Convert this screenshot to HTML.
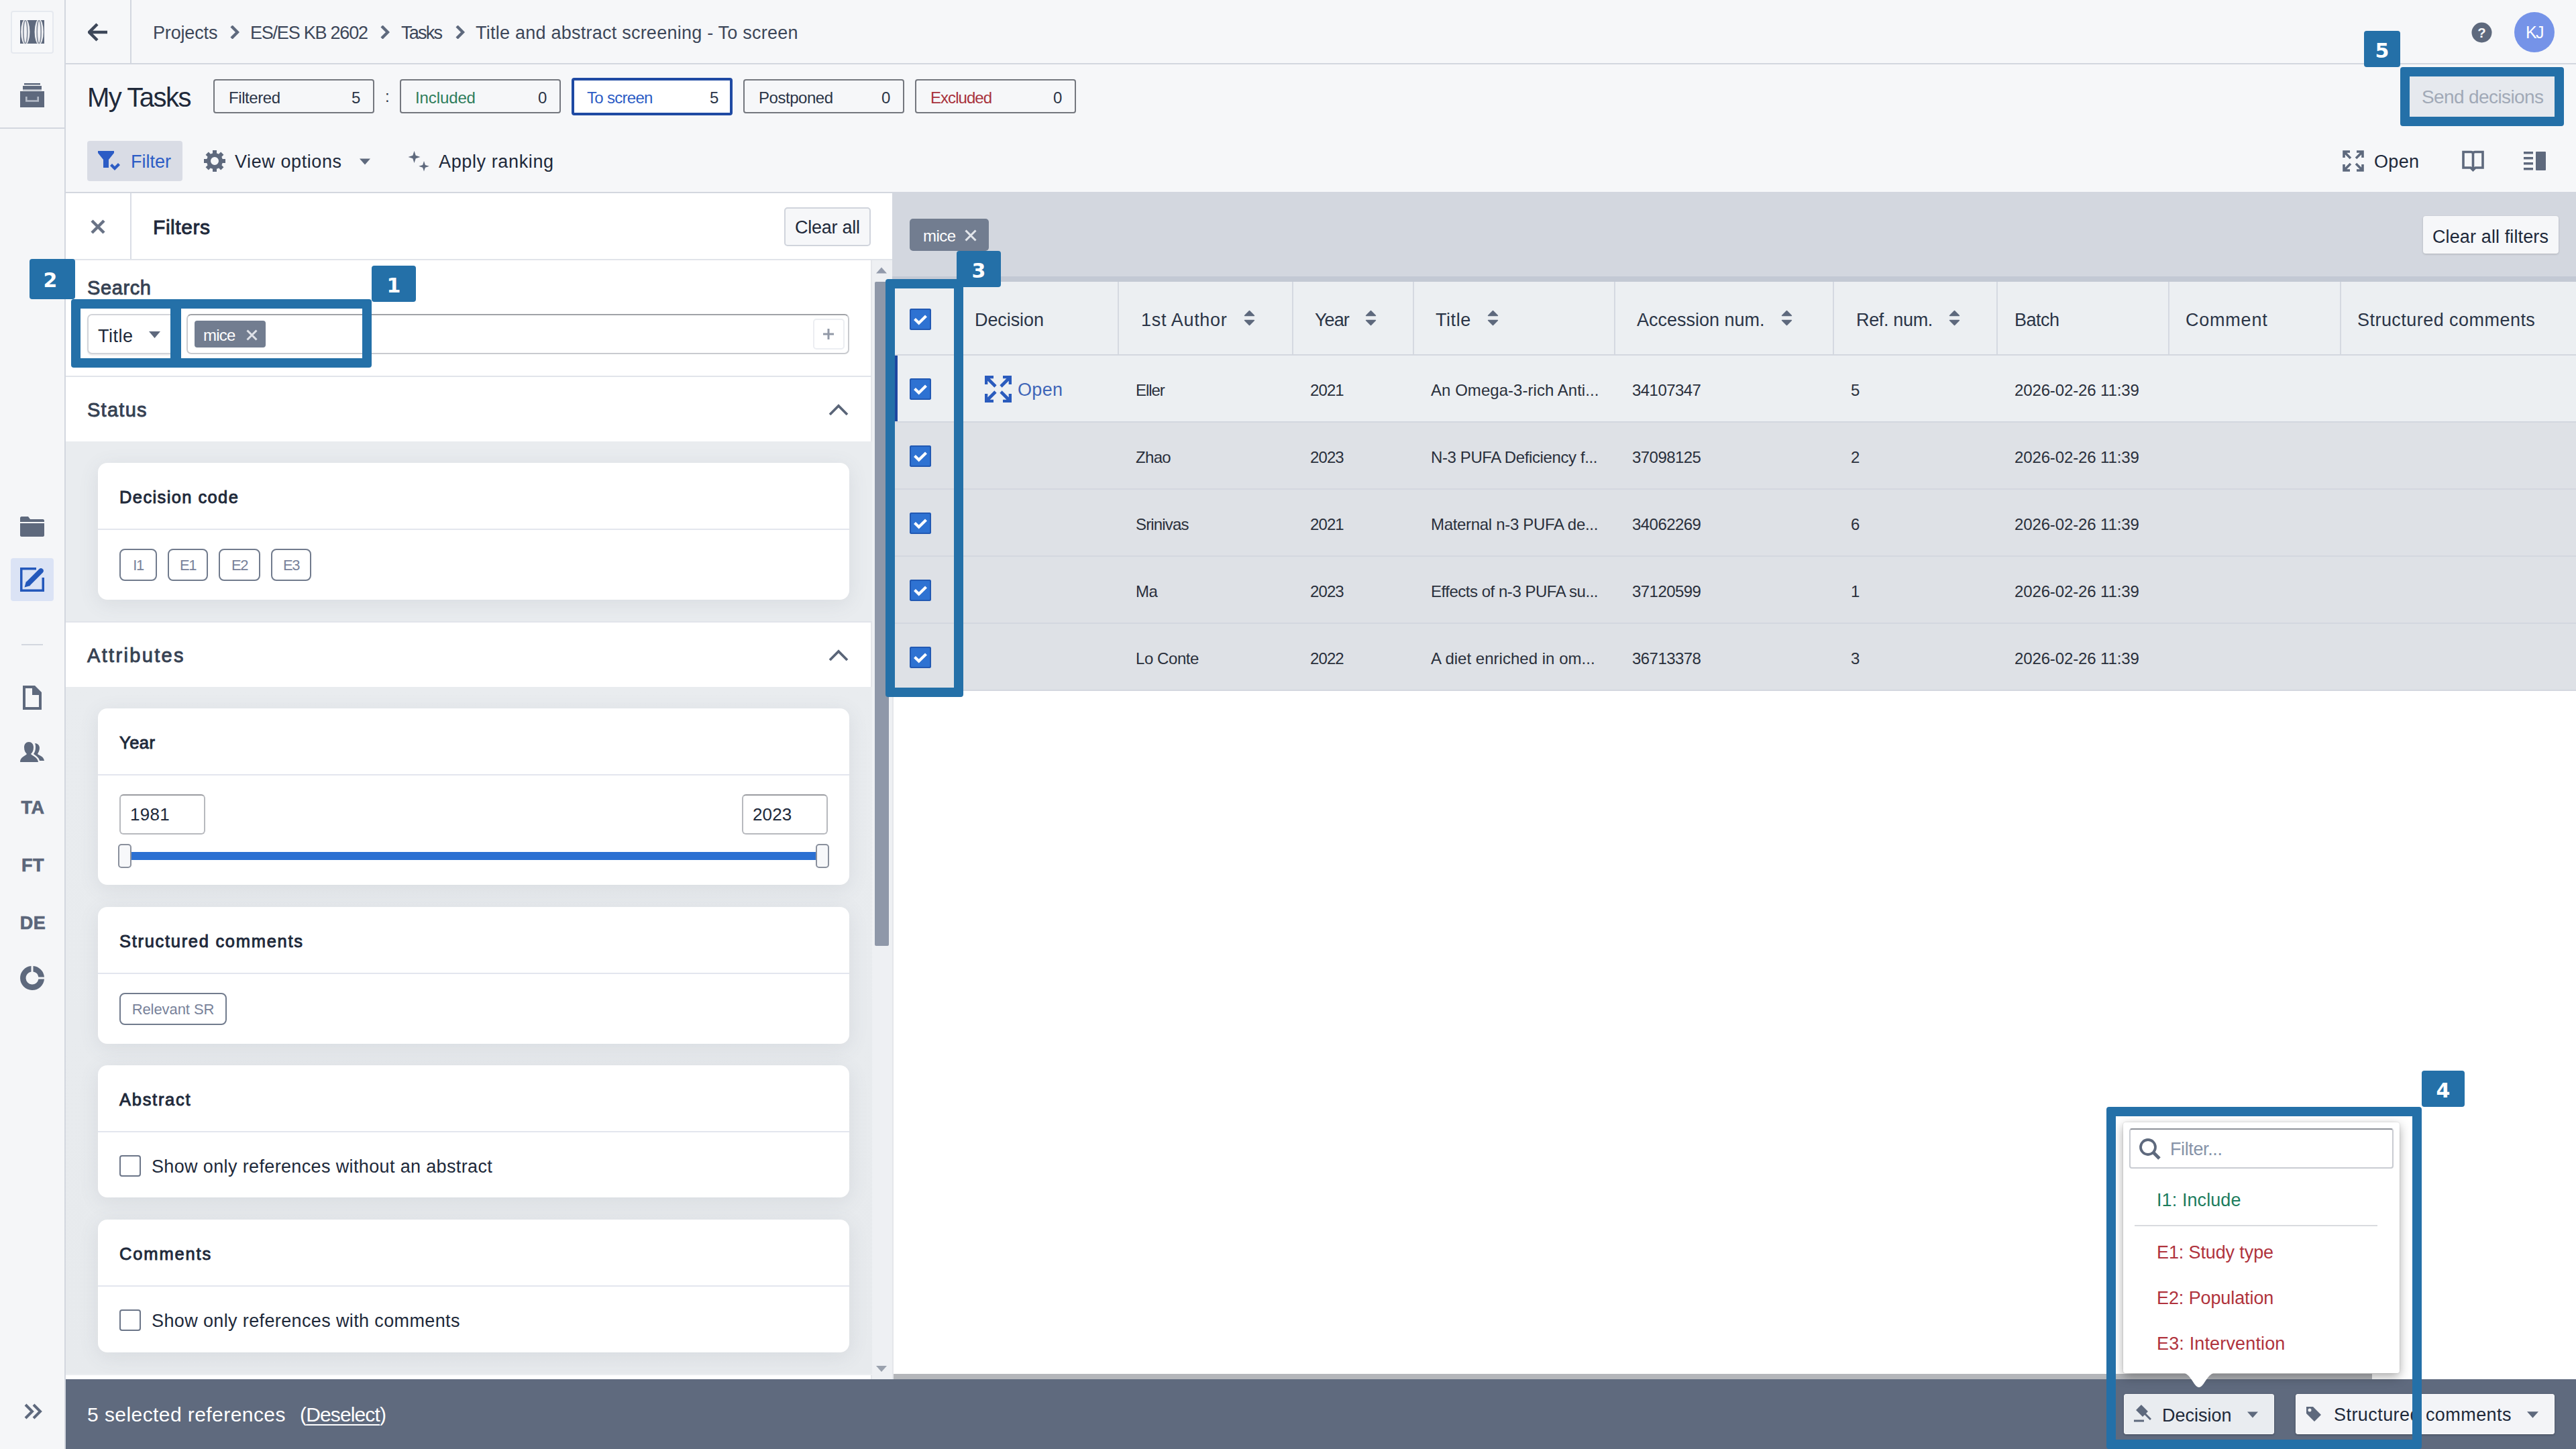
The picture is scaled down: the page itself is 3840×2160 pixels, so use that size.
<!DOCTYPE html>
<html lang="en">
<head>
<meta charset="utf-8">
<title>Title and abstract screening - To screen</title>
<style>
*{box-sizing:border-box;margin:0;padding:0}
html,body{width:3840px;height:2160px;overflow:hidden;background:#f6f7f9;font-family:"Liberation Sans",sans-serif;color:#2b3547}
.a{position:absolute}
.t{position:absolute;white-space:nowrap;line-height:40px;height:40px;font-size:27px;color:#2b3547;letter-spacing:0}
.b{font-weight:normal;-webkit-text-stroke:0.9px currentColor}
.box{position:absolute;border:2px solid #74777e;border-radius:4px}
.card{position:absolute;left:146px;width:1120px;background:#fff;border-radius:14px;box-shadow:0 6px 30px rgba(80,90,105,.11)}
.hr{position:absolute;left:0;right:0;height:2px;background:#e3e6ee}
.chip{position:absolute;border:2px solid #717b8d;border-radius:8px;color:#78829a;font-size:22px;text-align:center;line-height:46px;height:48px;top:818px;letter-spacing:-1.500px}
.cb{position:absolute;width:32px;height:32px;border-radius:3px;background:#2e72d2;box-shadow:inset 0 0 0 2px #2259b3;left:1356px}
.cb svg{position:absolute;left:0;top:0}
.ucb{position:absolute;width:32px;height:32px;border:2px solid #6b7588;border-radius:4px;background:#fff;left:178px}
.ann{position:absolute;border:14px solid #2470a8;border-radius:4px}
.badge{position:absolute;background:#2470a8;border-radius:4px;color:#fff;font-weight:bold;font-size:30px;text-align:center;font-family:"DejaVu Sans","Liberation Sans",sans-serif}
.row{position:absolute;left:1334px;right:0;height:100px;background:#dee1e6;border-bottom:2px solid #d3d7df}
.cell{position:absolute;white-space:nowrap;font-size:24px;line-height:40px;height:40px;color:#2a303c;letter-spacing:0}
.th{position:absolute;white-space:nowrap;font-size:27px;line-height:40px;height:40px;top:457px;color:#2b3547;letter-spacing:0}
.vb{position:absolute;top:420px;height:108px;width:2px;background:#d5d9e1}
.sort{position:absolute;top:462px}
.ic{position:absolute;fill:#5b667a}
.side{position:absolute;left:0;width:98px;text-align:center;font-weight:bold;font-size:27px;color:#5b667a;line-height:40px;height:40px;-webkit-text-stroke:0.7px #5b667a;letter-spacing:0.5px}
</style>
</head>
<body>
<!-- SIDEBAR -->
<div class="a" id="sidebar" style="left:0;top:0;width:98px;height:2160px;background:#f5f6f8;border-right:2px solid #d3d7df"></div>
<div class="a" style="left:0;top:190px;width:96px;height:2px;background:#d3d7df"></div>
<!-- logo -->
<div class="a" style="left:16px;top:16px;width:64px;height:64px;border:2px solid #e6e9ef;border-radius:4px;background:#f7f8fa"></div>
<svg class="a" style="left:30px;top:30px" width="36" height="36" viewBox="0 0 36 36"><rect width="36" height="35" fill="#5e697d"/><ellipse cx="7.800" cy="17.500" rx="6.600" ry="19" fill="#f1f2f5"/><ellipse cx="28.200" cy="17.500" rx="6.600" ry="19" fill="#f1f2f5"/><g fill="none" stroke="#5e697d" stroke-width="1.600" opacity=".75"><ellipse cx="7.800" cy="17.500" rx="3" ry="17"/><ellipse cx="28.200" cy="17.500" rx="3" ry="17"/></g></svg>
<!-- archive -->
<svg class="a" style="left:30px;top:124px" width="36" height="36" viewBox="0 0 36 36"><g fill="#5e697d"><rect x="6" y="0" width="24" height="2.500"/><rect x="4" y="4" width="28" height="5"/><rect x="4" y="9" width="28" height="2" opacity=".45"/><rect x="0" y="12" width="36" height="24"/></g><path fill="none" stroke="#b4bbc7" stroke-width="2.600" d="M9.300 20v6.500h17.400v-6.500"/></svg>
<!-- folder -->
<svg class="a" style="left:30px;top:770px" width="36" height="30" viewBox="0 0 36 30"><path fill="#5e697d" d="M0 2c0-1 1-2 2-2h10l3 4h19c1 0 2 1 2 2v2h-36zM0 10h36v18c0 1-1 2-2 2h-32c-1 0-2-1-2-2z"/></svg>
<!-- edit active -->
<div class="a" style="left:16px;top:832px;width:64px;height:64px;background:#dbe3f5;border-radius:4px"></div>
<svg class="a" style="left:30px;top:846px" width="36" height="36" viewBox="0 0 36 36"><g fill="none" stroke="#2458bb"><path d="M24 1.750H1.750v32.500h32.500V15" stroke-width="3.500"/><path d="M13.500 22.500L31 5" stroke-width="7.500" stroke-linecap="round"/></g><path fill="#2458bb" d="M6.500 29.500l2.500-9 6.500 6.500z"/></svg>
<div class="a" style="left:32px;top:960px;width:32px;height:2px;background:#d3d7df"></div>
<!-- file -->
<svg class="a" style="left:34px;top:1022px" width="28" height="36" viewBox="0 0 28 36"><path fill="#5e697d" fill-rule="evenodd" d="M0 0h18l10 10v26h-28zM4 4v28h20v-18h-10v-10z"/></svg>
<!-- users -->
<svg class="a" style="left:30px;top:1106px" width="36" height="30" viewBox="0 0 36 30"><g fill="#5e697d"><path d="M13 0c4 0 7 3 7 8s-2 8-4 10c2 3 10 4 11 12h-27c0-8 8-9 10-12-2-2-4-5-4-10s3-8 7-8z"/><path d="M22 2c4 0 7 3 7 7s-2 7-3 9c2 2 9 3 10 10h-7c-1-5-6-8-9-10 2-3 3-6 3-10 0-2 0-4-1-6z"/></g></svg>
<div class="side" style="top:1184px">TA</div>
<div class="side" style="top:1270px">FT</div>
<div class="side" style="top:1356px">DE</div>
<!-- pie -->
<svg class="a" style="left:30px;top:1440px" width="36" height="36" viewBox="0 0 36 36"><path fill="#5e697d" fill-rule="evenodd" d="M16.500 0v8.600a9.500 9.500 0 1 0 10.900 10.900h8.600a18 18 0 1 1-19.500-19.500zM19.500 0a18 18 0 0 1 16.500 16.500h-8.600a9.500 9.500 0 0 0-7.900-7.900z"/></svg>
<!-- expand -->
<svg class="a" style="left:35px;top:2091px" width="28" height="26" viewBox="0 0 28 26"><path fill="none" stroke="#5e697d" stroke-width="4" d="M3 3l10 10-10 10M15 3l10 10-10 10"/></svg>
<!-- TOPBAR -->
<div class="a" style="left:98px;top:94px;right:0;height:2px;background:#d3d7df"></div>
<div class="a" style="left:194px;top:0;width:2px;height:94px;background:#d3d7df"></div>
<svg class="a" style="left:131px;top:34px" width="30" height="28" viewBox="0 0 30 28"><path fill="none" stroke="#3d4759" stroke-width="4.5" d="M29 14h-25M14 2l-12 12 12 12"/></svg>
<span class="t" style="letter-spacing:-0.16px;left:228px;top:29px;color:#3d4759" id="bc1">Projects</span>
<svg class="a" style="left:343px;top:38px" width="14" height="20" viewBox="0 0 14 20"><path fill="none" stroke="#5e697d" stroke-width="4.400" d="M2 1l9 9-9 9"/></svg>
<span class="t" style="letter-spacing:-1.22px;left:373px;top:29px;color:#3d4759" id="bc2">ES/ES KB 2602</span>
<svg class="a" style="left:567px;top:38px" width="14" height="20" viewBox="0 0 14 20"><path fill="none" stroke="#5e697d" stroke-width="4.400" d="M2 1l9 9-9 9"/></svg>
<span class="t" style="letter-spacing:-1.76px;left:598px;top:29px;color:#3d4759" id="bc3">Tasks</span>
<svg class="a" style="left:679px;top:38px" width="14" height="20" viewBox="0 0 14 20"><path fill="none" stroke="#5e697d" stroke-width="4.400" d="M2 1l9 9-9 9"/></svg>
<span class="t" style="letter-spacing:0.24px;left:709px;top:29px;color:#3d4759" id="bc4">Title and abstract screening - To screen</span>
<!-- help + avatar -->
<svg class="a" style="left:3684px;top:33px" width="31" height="31" viewBox="0 0 32 32"><circle cx="16" cy="16" r="15.500" fill="#5e697d"/><text x="16" y="23.500" font-size="21" font-weight="bold" text-anchor="middle" fill="#f6f7f9" font-family="Liberation Sans, sans-serif">?</text></svg>
<div class="a" style="left:3748px;top:18px;width:60px;height:60px;border-radius:30px;background:#7593e8;color:#fff;font-size:25px;line-height:60px;text-align:center;letter-spacing:-1.500px">KJ</div>
<!-- HEADER -->
<span class="t" style="letter-spacing:-1.51px;left:130px;top:120px;font-size:40px;line-height:50px;height:50px;color:#20293a" id="mytasks">My Tasks</span>
<div class="box" style="left:318px;top:118px;width:240px;height:51px"></div>
<span class="t" style="letter-spacing:-0.43px;left:341px;top:126px;font-size:24px" id="s1">Filtered</span><span class="t" style="left:524px;top:126px;font-size:24px">5</span>
<span class="t" style="left:574px;top:124px;font-size:24px">:</span>
<div class="box" style="left:596px;top:118px;width:240px;height:51px"></div>
<span class="t" style="letter-spacing:-0.11px;left:619px;top:126px;font-size:24px;color:#2e7d5b" id="s2">Included</span><span class="t" style="left:802px;top:126px;font-size:24px">0</span>
<div class="box" style="left:852px;top:116px;width:240px;height:56px;border:4px solid #1f4aa3;background:#fff"></div>
<span class="t" style="letter-spacing:-0.71px;left:875px;top:126px;font-size:24px;color:#2c5cc5" id="s3">To screen</span><span class="t" style="left:1058px;top:126px;font-size:24px">5</span>
<div class="box" style="left:1108px;top:118px;width:240px;height:51px"></div>
<span class="t" style="letter-spacing:-0.47px;left:1131px;top:126px;font-size:24px" id="s4">Postponed</span><span class="t" style="left:1314px;top:126px;font-size:24px">0</span>
<div class="box" style="left:1364px;top:118px;width:240px;height:51px"></div>
<span class="t" style="letter-spacing:-0.96px;left:1387px;top:126px;font-size:24px;color:#a8323c" id="s5">Excluded</span><span class="t" style="left:1570px;top:126px;font-size:24px">0</span>
<!-- toolbar -->
<div class="a" style="left:130px;top:210px;width:142px;height:60px;background:#d9dce5;border-radius:4px"></div>
<svg class="a" style="left:146px;top:225px" width="33" height="29" viewBox="0 0 33 29"><g fill="#2c5cc5"><path d="M0 0h24v3l-8 10v12h-8v-12l-8-10z"/><path d="M18 22l3-3 4 4 5-5 3 3-8 8z"/></g></svg>
<span class="t" style="letter-spacing:0.0px;left:195px;top:221px;color:#2c5cc5" id="tb1">Filter</span>
<svg class="a" style="left:304px;top:224px" width="32" height="32" viewBox="0 0 32 32"><g fill="#5e697d"><path fill-rule="evenodd" d="M16 4a12 12 0 1 0 0 24 12 12 0 0 0 0-24zm0 6a6 6 0 1 1 0 12 6 6 0 0 1 0-12z"/><g id="gt"><rect x="13" y="0" width="6" height="6"/><rect x="13" y="26" width="6" height="6"/></g><use href="#gt" transform="rotate(45 16 16)"/><use href="#gt" transform="rotate(90 16 16)"/><use href="#gt" transform="rotate(135 16 16)"/></g></svg>
<span class="t" style="letter-spacing:0.58px;left:350px;top:221px;color:#20293a" id="tb2">View options</span>
<svg class="a" style="left:536px;top:236px" width="16" height="10" viewBox="0 0 18 10"><path fill="#5e697d" d="M0 0h18l-9 10z"/></svg>
<svg class="a" style="left:608px;top:224px" width="33" height="33" viewBox="0 0 33 33"><g fill="#5e697d"><path d="M9.500 1l2.200 6.800 6.800 2.200-6.800 2.200-2.200 6.800-2.200-6.800-6.800-2.200 6.800-2.200z"/><path d="M24 16l1.900 5.900 5.900 1.900-5.900 1.900-1.900 5.900-1.900-5.900-5.900-1.900 5.900-1.900z"/></g></svg>
<span class="t" style="letter-spacing:0.62px;left:654px;top:221px;color:#20293a" id="tb3">Apply ranking</span>
<!-- right toolbar -->
<svg class="a" style="left:3492px;top:224px" width="32" height="32" viewBox="0 0 32 32"><g fill="none" stroke="#5e697d" stroke-width="3.6"><path d="M2 11v-9h9M3 3l9 9M21 2h9v9M29 3l-9 9M2 21v9h9M3 29l9-9M30 21v9h-9M29 29l-9-9" /></g></svg>
<span class="t" style="letter-spacing:0.31px;left:3539px;top:221px;color:#20293a" id="tb4">Open</span>
<svg class="a" style="left:3670px;top:224px" width="33" height="33" viewBox="0 0 33 33"><path fill="none" stroke="#5e697d" stroke-width="3.600" d="M2 2.500h11.500q3 0 3 3q0-3 3-3h11.500v23.500h-11l-3.500 3.500l-3.500-3.500h-11zM16.500 5v23"/></svg>
<svg class="a" style="left:3762px;top:226px" width="33" height="28" viewBox="0 0 33 28"><g fill="#5e697d"><rect x="0" y="0" width="14" height="3.500"/><rect x="0" y="8" width="14" height="3.500"/><rect x="0" y="16" width="14" height="3.500"/><rect x="0" y="24" width="14" height="3.500"/><rect x="18" y="0" width="15" height="28" rx="1"/></g></svg>
<div class="a" style="left:98px;top:286px;right:0;height:2px;background:#d3d7df"></div>
<!-- FILTER PANEL -->
<div class="a" id="fpanel" style="left:98px;top:288px;width:1232px;height:1768px;background:#fff"></div>
<div class="a" style="left:194px;top:288px;width:2px;height:98px;background:#d9dde5"></div>
<svg class="a" style="left:134px;top:326px" width="24" height="24" viewBox="0 0 24 24"><path fill="none" stroke="#687285" stroke-width="4.500" d="M3 3l18 18M21 3l-18 18"/></svg>
<span class="t b" style="letter-spacing:0.55px;left:228px;top:319px;font-size:30px;color:#20293a" id="f_title">Filters</span>
<div class="a" style="left:1169px;top:309px;width:129px;height:58px;border:2px solid #d0d4dc;border-radius:5px;background:#f6f7f9"></div>
<span class="t" style="letter-spacing:-0.26px;left:1185px;top:319px;color:#20293a" id="f_clear">Clear all</span>
<div class="a" style="left:98px;top:386px;width:1232px;height:2px;background:#e1e4ea"></div>
<!-- scrollbar -->
<div class="a" style="left:1298px;top:388px;width:32px;height:1668px;background:#eef0f3;border-left:2px solid #e4e6ea"></div>
<svg class="a" style="left:1306px;top:398px" width="16" height="10" viewBox="0 0 16 9"><path fill="#929aab" d="M0 9l8-9 8 9z"/></svg>
<svg class="a" style="left:1306px;top:2036px" width="16" height="9" viewBox="0 0 16 9"><path fill="#9aa1ad" d="M0 0l8 9 8-9z"/></svg>
<div class="a" style="left:1304px;top:420px;width:21px;height:990px;background:#8f98a9;border-radius:2px"></div>
<!-- search -->
<span class="t b" style="letter-spacing:0.62px;left:130px;top:409px;font-size:29px;color:#364152" id="f_search">Search</span>
<div class="a" style="left:130px;top:468px;width:130px;height:60px;border:2px solid #d2d4d9;border-radius:7px;background:#fff;box-shadow:0 2px 2px rgba(0,0,0,.08)"></div>
<span class="t" style="letter-spacing:0.5px;left:146px;top:481px;color:#20293a" id="f_sel">Title</span>
<svg class="a" style="left:222px;top:494px" width="17" height="10" viewBox="0 0 17 10"><path fill="#5e697d" d="M0 0h17l-8.500 10z"/></svg>
<div class="a" style="left:278px;top:468px;width:988px;height:60px;border:2px solid #c9cbcf;border-top-color:#a0a2a7;border-radius:7px;background:#fff"></div>
<div class="a" style="left:290px;top:478px;width:106px;height:40px;border-radius:4px;background:#727d90"></div>
<span class="t" style="letter-spacing:-0.76px;left:303px;top:480px;font-size:24px;color:#fff" id="f_mice">mice</span>
<svg class="a" style="left:367px;top:491px" width="17" height="17" viewBox="0 0 17 17"><path fill="none" stroke="#dfe2e8" stroke-width="3" d="M1.500 1.500l14 14M15.500 1.500l-14 14"/></svg>
<div class="a" style="left:1212px;top:475px;width:47px;height:46px;border:2px solid #eceef2;border-radius:5px"></div>
<svg class="a" style="left:1227px;top:490px" width="16" height="16" viewBox="0 0 16 16"><path fill="none" stroke="#9299a7" stroke-width="3" d="M8 0v16M0 8h16"/></svg>
<div class="a" style="left:98px;top:560px;width:1202px;height:2px;background:#e1e4ea"></div>
<!-- status -->
<span class="t b" style="letter-spacing:1.26px;left:130px;top:591px;font-size:29px;color:#364152" id="f_status">Status</span>
<svg class="a" style="left:1235px;top:602px" width="30" height="18" viewBox="0 0 30 18"><path fill="none" stroke="#5a6578" stroke-width="3.800" d="M2 16l13-13 13 13"/></svg>
<div class="a" style="left:98px;top:658px;width:1202px;height:270px;background:#e9ecef"></div>
<div class="card" style="top:690px;height:204px"><div class="hr" style="top:98px"></div></div>
<span class="t b" style="letter-spacing:1.39px;left:178px;top:721px;font-size:25.500px;color:#20293a" id="c_dec">Decision code</span>
<div class="chip" style="left:178px;width:56px">I1</div>
<div class="chip" style="left:250px;width:60px">E1</div>
<div class="chip" style="left:326px;width:62px">E2</div>
<div class="chip" style="left:404px;width:60px">E3</div>
<!-- attributes -->
<div class="a" style="left:98px;top:926px;width:1202px;height:2px;background:#e1e4ea"></div>
<span class="t b" style="letter-spacing:2.34px;left:130px;top:957px;font-size:29px;color:#364152" id="f_attr">Attributes</span>
<svg class="a" style="left:1235px;top:968px" width="30" height="18" viewBox="0 0 30 18"><path fill="none" stroke="#5a6578" stroke-width="3.800" d="M2 16l13-13 13 13"/></svg>
<div class="a" style="left:98px;top:1024px;width:1202px;height:1026px;background:linear-gradient(#e9ecef,#e7eaed)"></div>
<!-- year -->
<div class="card" style="top:1056px;height:263px"><div class="hr" style="top:98px"></div></div>
<span class="t b" style="letter-spacing:0.49px;left:178px;top:1087px;font-size:25.500px;color:#20293a" id="c_year">Year</span>
<div class="a" style="left:178px;top:1184px;width:128px;height:60px;border:2px solid #b7b9be;border-top-color:#9a9ca1;border-radius:6px;background:#fff"></div>
<span class="t" style="letter-spacing:0.32px;left:194px;top:1194px;color:#20293a;font-size:26px" id="y1">1981</span>
<div class="a" style="left:1106px;top:1184px;width:128px;height:60px;border:2px solid #b7b9be;border-top-color:#9a9ca1;border-radius:6px;background:#fff"></div>
<span class="t" style="letter-spacing:0.15px;left:1122px;top:1194px;color:#20293a;font-size:26px" id="y2">2023</span>
<div class="a" style="left:186px;top:1270px;width:1040px;height:12px;background:#2b70d2"></div>
<div class="a" style="left:176px;top:1258px;width:20px;height:36px;border:2px solid #8a909d;border-radius:5px;background:#f7f8fa"></div>
<div class="a" style="left:1216px;top:1258px;width:20px;height:36px;border:2px solid #8a909d;border-radius:5px;background:#f7f8fa"></div>
<!-- structured comments -->
<div class="card" style="top:1352px;height:204px"><div class="hr" style="top:98px"></div></div>
<span class="t b" style="letter-spacing:1.7px;left:178px;top:1383px;font-size:25.500px;color:#20293a" id="c_sc">Structured comments</span>
<div class="chip" style="letter-spacing:-0.07px;left:178px;top:1480px;width:160px" id="chip_sr">Relevant SR</div>
<!-- abstract -->
<div class="card" style="top:1588px;height:197px"><div class="hr" style="top:98px"></div></div>
<span class="t b" style="letter-spacing:1.72px;left:178px;top:1619px;font-size:25.500px;color:#20293a" id="c_abs">Abstract</span>
<div class="ucb" style="top:1722px"></div>
<span class="t" style="letter-spacing:0.36px;left:226px;top:1719px;color:#20293a" id="l_abs">Show only references without an abstract</span>
<!-- comments -->
<div class="card" style="top:1818px;height:198px"><div class="hr" style="top:98px"></div></div>
<span class="t b" style="letter-spacing:1.86px;left:178px;top:1849px;font-size:25.500px;color:#20293a" id="c_com">Comments</span>
<div class="ucb" style="top:1952px"></div>
<span class="t" style="letter-spacing:0.37px;left:226px;top:1949px;color:#20293a" id="l_com">Show only references with comments</span>
<div class="a" style="left:98px;top:2048px;width:1202px;height:2px;background:#eceef1"></div>
<!-- TABLE PANEL -->
<div class="a" id="tpanel" style="left:1330px;top:288px;right:0;height:1768px;background:#fff;border-left:2px solid #e4e6ea"></div>
<div class="a" style="left:1330px;top:288px;right:0;height:124px;background:#d3d7df"></div>
<div class="a" style="left:1330px;top:412px;right:0;height:8px;background:#c3c9d4"></div>
<div class="a" style="left:1356px;top:326px;width:118px;height:48px;border-radius:5px;background:#727d90"></div>
<span class="t" style="letter-spacing:-0.49px;left:1376px;top:332px;font-size:24px;color:#fff" id="t_mice">mice</span>
<svg class="a" style="left:1438px;top:342px" width="18" height="18" viewBox="0 0 18 18"><path fill="none" stroke="#e3e6eb" stroke-width="3" d="M1.500 1.500l15 15M16.500 1.500l-15 15"/></svg>
<div class="a" style="left:3612px;top:322px;width:202px;height:56px;border-radius:4px;background:#f6f7f9;box-shadow:0 1px 3px rgba(0,0,0,.18)"></div>
<span class="t" style="letter-spacing:0.12px;left:3626px;top:333px;color:#20293a" id="t_caf">Clear all filters</span>
<div class="a" style="left:1334px;top:420px;right:0;height:110px;background:#eceff2;border-bottom:2px solid #d3d7df"></div>
<div class="vb" style="left:1666px"></div>
<div class="vb" style="left:1926px"></div>
<div class="vb" style="left:2106px"></div>
<div class="vb" style="left:2406px"></div>
<div class="vb" style="left:2732px"></div>
<div class="vb" style="left:2976px"></div>
<div class="vb" style="left:3232px"></div>
<div class="vb" style="left:3488px"></div>
<div class="cb" style="top:460px"><svg width="32" height="32" viewBox="0 0 32 32"><path fill="none" stroke="#fff" stroke-width="4.200" d="M7.500 15.500l6.200 6 10.800-10.500"/></svg></div>
<span class="th" style="letter-spacing:-0.08px;left:1453px" id="h0">Decision</span>
<span class="th" style="letter-spacing:0.68px;left:1701px" id="h1">1st Author</span>
<svg class="sort" style="left:1854px" width="17" height="24" viewBox="0 0 16 24" preserveAspectRatio="none"><path fill="#5e697d" stroke="#5e697d" stroke-width="1.500" stroke-linejoin="round" d="M1.500 8.500l6.500-7 6.500 7zM1.500 15.500l6.500 7 6.500-7z"/></svg>
<span class="th" style="letter-spacing:-0.95px;left:1960px" id="h2">Year</span>
<svg class="sort" style="left:2035px" width="17" height="24" viewBox="0 0 16 24" preserveAspectRatio="none"><path fill="#5e697d" stroke="#5e697d" stroke-width="1.500" stroke-linejoin="round" d="M1.500 8.500l6.500-7 6.500 7zM1.500 15.500l6.500 7 6.500-7z"/></svg>
<span class="th" style="letter-spacing:0.55px;left:2140px" id="h3">Title</span>
<svg class="sort" style="left:2217px" width="17" height="24" viewBox="0 0 16 24" preserveAspectRatio="none"><path fill="#5e697d" stroke="#5e697d" stroke-width="1.500" stroke-linejoin="round" d="M1.500 8.500l6.500-7 6.500 7zM1.500 15.500l6.500 7 6.500-7z"/></svg>
<span class="th" style="letter-spacing:0.0px;left:2440px" id="h4">Accession num.</span>
<svg class="sort" style="left:2655px" width="17" height="24" viewBox="0 0 16 24" preserveAspectRatio="none"><path fill="#5e697d" stroke="#5e697d" stroke-width="1.500" stroke-linejoin="round" d="M1.500 8.500l6.500-7 6.500 7zM1.500 15.500l6.500 7 6.500-7z"/></svg>
<span class="th" style="letter-spacing:-0.34px;left:2767px" id="h5">Ref. num.</span>
<svg class="sort" style="left:2905px" width="17" height="24" viewBox="0 0 16 24" preserveAspectRatio="none"><path fill="#5e697d" stroke="#5e697d" stroke-width="1.500" stroke-linejoin="round" d="M1.500 8.500l6.500-7 6.500 7zM1.500 15.500l6.500 7 6.500-7z"/></svg>
<span class="th" style="letter-spacing:-0.51px;left:3003px" id="h6">Batch</span>
<span class="th" style="letter-spacing:0.78px;left:3258px" id="h7">Comment</span>
<span class="th" style="letter-spacing:0.46px;left:3514px" id="h8">Structured comments</span>
<div class="row" style="top:530px;background:#eceff2"></div>
<div class="cb" style="top:564px"><svg width="32" height="32" viewBox="0 0 32 32"><path fill="none" stroke="#fff" stroke-width="4.200" d="M7.500 15.500l6.200 6 10.800-10.500"/></svg></div>
<span class="cell" style="letter-spacing:-1.05px;left:1693px;top:562px" id="r0c0">Eller</span>
<span class="cell" style="letter-spacing:-0.9px;left:1953px;top:562px" id="r0c1">2021</span>
<span class="cell" style="letter-spacing:0.04px;left:2133px;top:562px" id="r0c2">An Omega-3-rich Anti...</span>
<span class="cell" style="letter-spacing:-0.55px;left:2433px;top:562px" id="r0c3">34107347</span>
<span class="cell" style="left:2759px;top:562px" id="r0c4">5</span>
<span class="cell" style="letter-spacing:-0.13px;left:3003px;top:562px" id="r0c5">2026-02-26 11:39</span>
<div class="row" style="top:630px;background:#dee1e6"></div>
<div class="cb" style="top:664px"><svg width="32" height="32" viewBox="0 0 32 32"><path fill="none" stroke="#fff" stroke-width="4.200" d="M7.500 15.500l6.200 6 10.800-10.500"/></svg></div>
<span class="cell" style="letter-spacing:-0.67px;left:1693px;top:662px" id="r1c0">Zhao</span>
<span class="cell" style="letter-spacing:-0.9px;left:1953px;top:662px" id="r1c1">2023</span>
<span class="cell" style="letter-spacing:-0.39px;left:2133px;top:662px" id="r1c2">N-3 PUFA Deficiency f...</span>
<span class="cell" style="letter-spacing:-0.55px;left:2433px;top:662px" id="r1c3">37098125</span>
<span class="cell" style="left:2759px;top:662px" id="r1c4">2</span>
<span class="cell" style="letter-spacing:-0.13px;left:3003px;top:662px" id="r1c5">2026-02-26 11:39</span>
<div class="row" style="top:730px;background:#dee1e6"></div>
<div class="cb" style="top:764px"><svg width="32" height="32" viewBox="0 0 32 32"><path fill="none" stroke="#fff" stroke-width="4.200" d="M7.500 15.500l6.200 6 10.800-10.500"/></svg></div>
<span class="cell" style="letter-spacing:-0.84px;left:1693px;top:762px" id="r2c0">Srinivas</span>
<span class="cell" style="letter-spacing:-0.9px;left:1953px;top:762px" id="r2c1">2021</span>
<span class="cell" style="letter-spacing:-0.31px;left:2133px;top:762px" id="r2c2">Maternal n-3 PUFA de...</span>
<span class="cell" style="letter-spacing:-0.55px;left:2433px;top:762px" id="r2c3">34062269</span>
<span class="cell" style="left:2759px;top:762px" id="r2c4">6</span>
<span class="cell" style="letter-spacing:-0.13px;left:3003px;top:762px" id="r2c5">2026-02-26 11:39</span>
<div class="row" style="top:830px;background:#dee1e6"></div>
<div class="cb" style="top:864px"><svg width="32" height="32" viewBox="0 0 32 32"><path fill="none" stroke="#fff" stroke-width="4.200" d="M7.500 15.500l6.200 6 10.800-10.500"/></svg></div>
<span class="cell" style="letter-spacing:-0.54px;left:1693px;top:862px" id="r3c0">Ma</span>
<span class="cell" style="letter-spacing:-0.9px;left:1953px;top:862px" id="r3c1">2023</span>
<span class="cell" style="letter-spacing:-0.48px;left:2133px;top:862px" id="r3c2">Effects of n-3 PUFA su...</span>
<span class="cell" style="letter-spacing:-0.55px;left:2433px;top:862px" id="r3c3">37120599</span>
<span class="cell" style="left:2759px;top:862px" id="r3c4">1</span>
<span class="cell" style="letter-spacing:-0.13px;left:3003px;top:862px" id="r3c5">2026-02-26 11:39</span>
<div class="row" style="top:930px;background:#dee1e6"></div>
<div class="cb" style="top:964px"><svg width="32" height="32" viewBox="0 0 32 32"><path fill="none" stroke="#fff" stroke-width="4.200" d="M7.500 15.500l6.200 6 10.800-10.500"/></svg></div>
<span class="cell" style="letter-spacing:-0.43px;left:1693px;top:962px" id="r4c0">Lo Conte</span>
<span class="cell" style="letter-spacing:-0.9px;left:1953px;top:962px" id="r4c1">2022</span>
<span class="cell" style="letter-spacing:0.02px;left:2133px;top:962px" id="r4c2">A diet enriched in om...</span>
<span class="cell" style="letter-spacing:-0.55px;left:2433px;top:962px" id="r4c3">36713378</span>
<span class="cell" style="left:2759px;top:962px" id="r4c4">3</span>
<span class="cell" style="letter-spacing:-0.13px;left:3003px;top:962px" id="r4c5">2026-02-26 11:39</span>
<div class="a" style="left:1334px;top:530px;width:4px;height:98px;background:#1e47a0"></div>
<svg class="a" style="left:1468px;top:560px" width="40" height="40" viewBox="0 0 40 40"><g fill="none" stroke="#2a5bbd" stroke-width="4.600"><path d="M2 13v-11h11M3 3l13 13M27 2h11v11M37 3l-13 13M2 27v11h11M3 37l13-13M38 27v11h-11M37 37l-13-13"/></g></svg>
<span class="t" style="letter-spacing:0.31px;left:1517px;top:561px;color:#3f66b8" id="r_open">Open</span>
<div class="a" style="left:1332px;top:2048px;width:2204px;height:8px;background:#b4b6ba"></div>
<!-- BOTTOM BAR -->
<div class="a" id="bbar" style="left:98px;top:2056px;right:0;height:104px;background:#5f6a7e"></div>
<span class="t" style="letter-spacing:0.43px;left:130px;top:2089px;font-size:30px;color:#fff" id="b_sel">5 selected references</span>
<span class="t" style="letter-spacing:-0.86px;left:447px;top:2089px;font-size:30px;color:#fff" id="b_des">(<span style="text-decoration:underline;text-decoration-thickness:2px;text-underline-offset:4px">Deselect</span>)</span>
<div class="a" style="left:3166px;top:2078px;width:224px;height:60px;border-radius:3px;background:#e9ecf0;border:1px solid #f4f5f7;box-shadow:0 1px 3px rgba(0,0,0,.3)"></div>
<svg class="a" style="left:3181px;top:2094px" width="26" height="26" viewBox="0 0 26 26"><g fill="none" stroke="#5e697d" stroke-width="3"><path d="M9 2l10 10M5 6l10 10M7 4l10 10" stroke-width="5.500"/><path d="M14 11l11 11"/><path d="M0 24h15"/></g></svg>
<span class="t" style="letter-spacing:-0.01px;left:3223px;top:2090px;color:#20293a" id="b_dec">Decision</span>
<svg class="a" style="left:3350px;top:2104px" width="16" height="10" viewBox="0 0 18 10"><path fill="#5e697d" d="M0 0h18l-9 10z"/></svg>
<div class="a" style="left:3422px;top:2078px;width:386px;height:60px;border-radius:3px;background:#f3f4f7;border:1px solid #fbfbfc;box-shadow:0 1px 3px rgba(0,0,0,.3)"></div>
<svg class="a" style="left:3437px;top:2096px" width="24" height="24" viewBox="0 0 24 24"><path fill="#5e697d" fill-rule="evenodd" d="M1 1h10l12 12-10 10-12-12zM6 3.500a2.500 2.500 0 1 0 0 5 2.500 2.500 0 0 0 0-5z"/></svg>
<span class="t" style="letter-spacing:0.44px;left:3479px;top:2089px;color:#20293a" id="b_sc">Structured comments</span>
<svg class="a" style="left:3767px;top:2104px" width="17" height="10" viewBox="0 0 18 10"><path fill="#5e697d" d="M0 0h18l-9 10z"/></svg>
<!-- POPUP -->
<div class="a" style="left:3165px;top:1673px;width:412px;height:374px;background:#fff;border-radius:4px;box-shadow:0 5px 16px rgba(0,0,0,.34),0 0 0 1px rgba(0,0,0,.06)"></div>
<svg class="a" style="left:3252px;top:2046px" width="52" height="24" viewBox="0 0 52 24"><path fill="#fff" d="M0 0h52c-14 0-18 22-26 22s-12-22-26-22z"/></svg>
<div class="a" style="left:3174px;top:1682px;width:394px;height:60px;border:2px solid #c9ccd2;border-top-color:#8d9199;border-radius:4px;background:#fff"></div>
<svg class="a" style="left:3188px;top:1696px" width="34" height="34" viewBox="0 0 34 34"><g fill="none" stroke="#5e697d"><circle cx="14" cy="14" r="11" stroke-width="3.800"/><path d="M22 22l9 9" stroke-width="5"/></g></svg>
<span class="t" style="letter-spacing:-0.38px;left:3235px;top:1693px;color:#8693a8" id="p_f">Filter...</span>
<span class="t" style="letter-spacing:0.09px;left:3215px;top:1769px;color:#1d7d5e" id="p_i1">I1: Include</span>
<div class="a" style="left:3182px;top:1826px;width:362px;height:2px;background:#d9dbdf"></div>
<span class="t" style="letter-spacing:-0.12px;left:3215px;top:1847px;color:#b0333d" id="p_e1">E1: Study type</span>
<span class="t" style="letter-spacing:-0.1px;left:3215px;top:1915px;color:#b0333d" id="p_e2">E2: Population</span>
<span class="t" style="letter-spacing:0.15px;left:3215px;top:1983px;color:#b0333d" id="p_e3">E3: Intervention</span>
<!-- ANNOTATIONS -->
<div class="ann" style="left:106px;top:446px;width:448px;height:102px"></div>
<div class="a" style="left:254px;top:446px;width:16px;height:102px;background:#2470a8"></div>
<div class="badge" style="left:44px;top:386px;width:68px;height:60px;line-height:64px;padding-right:6px">2</div>
<div class="badge" style="left:554px;top:396px;width:66px;height:54px;line-height:60px">1</div>
<div class="ann" style="left:1320px;top:416px;width:116px;height:623px"></div>
<div class="badge" style="left:1426px;top:374px;width:66px;height:54px;line-height:60px">3</div>
<div class="ann" style="left:3140px;top:1650px;width:470px;height:510px"></div>
<div class="badge" style="left:3610px;top:1596px;width:64px;height:54px;line-height:60px">4</div>
<div class="ann" style="left:3578px;top:100px;width:244px;height:88px"></div>
<div class="a" style="left:3592px;top:114px;width:216px;height:60px;background:#e6e9ee"></div>
<span class="t" style="letter-spacing:-0.61px;left:3610px;top:125px;font-size:28px;color:#a1a9b7" id="o_send">Send decisions</span>
<div class="badge" style="left:3524px;top:46px;width:54px;height:54px;line-height:60px">5</div>
</body>
</html>
